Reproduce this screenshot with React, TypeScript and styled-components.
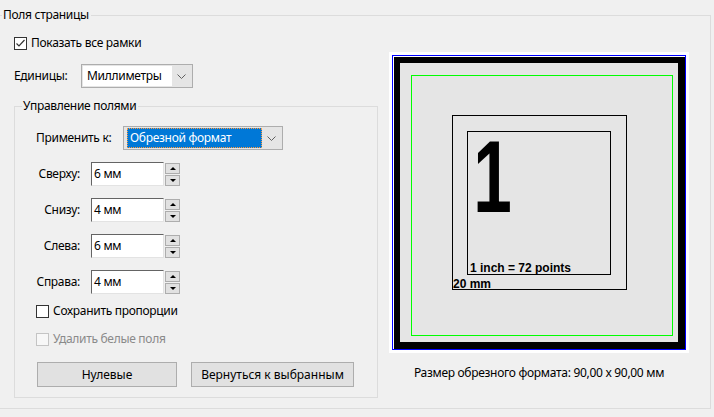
import React from "react";
import styled, { createGlobalStyle } from "styled-components";

const GlobalStyle = createGlobalStyle`
    html, body {
        margin: 0;
        padding: 0;
        background: #f0f0f0;
    }
    body {
        font-family: "Noto Sans", "Open Sans", sans-serif;
        font-size: 12px;
        line-height: 16px;
        letter-spacing: -0.3px;
        color: #000000;
    }
`;

const Page = styled.div`
    width: 714px;
    height: 417px;
    overflow: hidden;
    background: #f0f0f0;
`;

const GroupBox = styled.fieldset<{ $width: number; $height: number }>`
    box-sizing: border-box;
    width: ${(p) => p.$width}px;
    height: ${(p) => p.$height}px;
    margin: 0;
    padding: 0;
    border: 1px solid #dcdcdc;
    min-width: 0;
`;

const OuterGroup = styled(GroupBox)`
    margin: 7px 0 0 -6px;
`;

const InnerGroup = styled(GroupBox)`
    margin-top: 10px;
`;

const Legend = styled.legend`
    margin-left: 7px;
    padding: 0 2px 0 1px;
    line-height: 16px;
`;

const Columns = styled.div`
    display: flex;
    align-items: flex-start;
    padding-left: 19px;
`;

const LeftCol = styled.div`
    display: flex;
    flex-direction: column;
    width: 364px;
`;

const RightCol = styled.div`
    display: flex;
    flex-direction: column;
    align-items: center;
    margin-left: 11px;
    margin-top: 29px;
    width: 300px;
`;

const CheckRow = styled.label<{ $top: number; $disabled?: boolean }>`
    display: flex;
    align-items: center;
    gap: 4px;
    height: 16px;
    margin-top: ${(p) => p.$top}px;
    color: ${(p) => (p.$disabled ? "#8a8a8a" : "#000000")};
`;

const Box = styled.span<{ $disabled?: boolean }>`
    box-sizing: border-box;
    width: 13px;
    height: 13px;
    border: 1px solid ${(p) => (p.$disabled ? "#c4c4c4" : "#333333")};
    background: ${(p) => (p.$disabled ? "#f7f7f7" : "#ffffff")};
    display: flex;
    align-items: center;
    justify-content: center;
`;

const FieldRow = styled.div<{ $top: number }>`
    display: flex;
    align-items: center;
    height: 24px;
    margin-top: ${(p) => p.$top}px;
`;

const FieldLabel = styled.span<{ $width: number }>`
    width: ${(p) => p.$width}px;
`;

const Combo = styled.div<{ $width: number }>`
    box-sizing: border-box;
    display: flex;
    align-items: center;
    width: ${(p) => p.$width}px;
    height: 24px;
    border: 1px solid #adadad;
    background: #e5e5e5;
    padding: 1px;
`;

const ComboText = styled.div<{ $selected?: boolean }>`
    flex: 1;
    height: 20px;
    line-height: 20px;
    padding-left: ${(p) => (p.$selected ? "3px" : "4px")};
    background: ${(p) => (p.$selected ? "#0078d7" : "#ffffff")};
    color: ${(p) => (p.$selected ? "#ffffff" : "#000000")};
    outline: ${(p) => (p.$selected ? "1px dotted #ff9a3c" : "none")};
    outline-offset: -1px;
    margin-left: ${(p) => (p.$selected ? "2px" : "0")};
`;

const ComboArrow = styled.div`
    width: 19px;
    display: flex;
    justify-content: center;
    align-items: center;
`;

const Inner = styled.div`
    display: flex;
    flex-direction: column;
    padding-left: 21px;
`;

const MarginGrid = styled.div`
    display: grid;
    grid-template-columns: 43px 73px 15px;
    column-gap: 12px;
    row-gap: 12px;
    margin-top: 12px;
    align-items: center;
`;

const MarginLabel = styled.span`
    text-align: right;
    margin-right: -1px;
`;

const SpinField = styled.div`
    display: flex;
    gap: 1px;
    grid-column: span 2;
`;

const NumInput = styled.div`
    box-sizing: border-box;
    width: 73px;
    height: 24px;
    background: #ffffff;
    border-top: 1px solid #646464;
    border-left: 1px solid #646464;
    border-right: 1px solid #e3e3e3;
    border-bottom: 1px solid #e3e3e3;
    padding-left: 2px;
    line-height: 21px;
`;

const Spinner = styled.div`
    display: flex;
    flex-direction: column;
    gap: 1px;
    width: 15px;
    padding-top: 1px;
`;

const SpinButton = styled.div<{ $down?: boolean }>`
    box-sizing: border-box;
    height: 11px;
    border: 1px solid #adadad;
    background: #e1e1e1;
    display: flex;
    align-items: center;
    justify-content: center;

    &::after {
        content: "";
        width: 0;
        height: 0;
        border-left: 3px solid transparent;
        border-right: 3px solid transparent;
        ${(p) =>
            p.$down
                ? "border-top: 3px solid #000000;"
                : "border-bottom: 3px solid #000000;"}
    }
`;

const ButtonRow = styled.div`
    display: flex;
    gap: 14px;
    margin-top: 15px;
    padding-left: 1px;
`;

const PushButton = styled.button<{ $width: number }>`
    box-sizing: border-box;
    width: ${(p) => p.$width}px;
    height: 25px;
    border: 1px solid #adadad;
    background: #e1e1e1;
    font: inherit;
    color: #000000;
    padding: 0;
`;

const Caption = styled.div`
    margin-top: 12px;
    white-space: nowrap;
`;

const PreviewText = styled.text`
    font-family: "Liberation Sans", Arial, sans-serif;
    font-weight: bold;
    letter-spacing: 0;
    fill: #000000;
`;

const Chevron = () => (
    <svg width="9" height="5" viewBox="0 0 9 5">
        <polyline points="0.5,0.5 4.5,4.5 8.5,0.5" fill="none" stroke="#606060" strokeWidth="1" />
    </svg>
);

const Check = () => (
    <svg width="11" height="11" viewBox="0 0 11 11">
        <polyline points="1.5,5.5 4,8 9.5,2" fill="none" stroke="#333333" strokeWidth="1.2" />
    </svg>
);

// 1px outline drawn from four filled strips so it lands on whole pixels
const Frame = ({ x, y, w, h, color }: { x: number; y: number; w: number; h: number; color: string }) => (
    <g fill={color}>
        <rect x={x} y={y} width={w} height={1} />
        <rect x={x} y={y + h - 1} width={w} height={1} />
        <rect x={x} y={y} width={1} height={h} />
        <rect x={x + w - 1} y={y} width={1} height={h} />
    </g>
);

const PagePreview = () => (
    <svg width="300" height="301" viewBox="0 0 300 301" shapeRendering="crispEdges">
        <rect x="0" y="0" width="300" height="301" fill="#ffffff" />
        <Frame x={3} y={3} w={294} h={295} color="#0000ff" />
        <rect x="5" y="5" width="291" height="292" fill="#000000" />
        <rect x="11" y="11" width="278" height="279" fill="#e5e5e5" />
        <Frame x={22} y={23} w={262} h={261} color="#00ff00" />
        <Frame x={63} y={63} w={175} h={175} color="#000000" />
        <Frame x={78} y={79} w={144} h={144} color="#000000" />
        <g transform="translate(87 0) scale(0.68 1)">
            <PreviewText x="-4" y="160" fontSize="102">
                1
            </PreviewText>
        </g>
        <PreviewText x="81" y="220" fontSize="12">
            1 inch = 72 points
        </PreviewText>
        <PreviewText x="64" y="236" fontSize="12">
            20 mm
        </PreviewText>
    </svg>
);

const margins = [
    { label: "Сверху:", value: "6 мм" },
    { label: "Снизу:", value: "4 мм" },
    { label: "Слева:", value: "6 мм" },
    { label: "Справа:", value: "4 мм" },
];

export default function App() {
    return (
        <Page>
            <GlobalStyle />
            <OuterGroup $width={717} $height={402}>
                <Legend>Поля страницы</Legend>
                <Columns>
                    <LeftCol>
                        <CheckRow $top={12}>
                            <Box>
                                <Check />
                            </Box>
                            Показать все рамки
                        </CheckRow>
                        <FieldRow $top={13}>
                            <FieldLabel $width={67}>Единицы:</FieldLabel>
                            <Combo $width={112}>
                                <ComboText>Миллиметры</ComboText>
                                <ComboArrow>
                                    <Chevron />
                                </ComboArrow>
                            </Combo>
                        </FieldRow>
                        <InnerGroup $width={364} $height={300}>
                            <Legend>Управление полями</Legend>
                            <Inner>
                                <FieldRow $top={12}>
                                    <FieldLabel $width={87}>Применить к:</FieldLabel>
                                    <Combo $width={160}>
                                        <ComboText $selected>Обрезной формат</ComboText>
                                        <ComboArrow>
                                            <Chevron />
                                        </ComboArrow>
                                    </Combo>
                                </FieldRow>
                                <MarginGrid>
                                    {margins.map((m) => (
                                        <React.Fragment key={m.label}>
                                            <MarginLabel>{m.label}</MarginLabel>
                                            <SpinField>
                                                <NumInput>{m.value}</NumInput>
                                                <Spinner>
                                                    <SpinButton />
                                                    <SpinButton $down />
                                                </Spinner>
                                            </SpinField>
                                        </React.Fragment>
                                    ))}
                                </MarginGrid>
                                <CheckRow $top={9}>
                                    <Box />
                                    Сохранить пропорции
                                </CheckRow>
                                <CheckRow $top={12} $disabled>
                                    <Box $disabled />
                                    Удалить белые поля
                                </CheckRow>
                                <ButtonRow>
                                    <PushButton $width={140}>Нулевые</PushButton>
                                    <PushButton $width={163}>Вернуться к выбранным</PushButton>
                                </ButtonRow>
                            </Inner>
                        </InnerGroup>
                    </LeftCol>
                    <RightCol>
                        <PagePreview />
                        <Caption>Размер обрезного формата: 90,00 x 90,00 мм</Caption>
                    </RightCol>
                </Columns>
            </OuterGroup>
        </Page>
    );
}
